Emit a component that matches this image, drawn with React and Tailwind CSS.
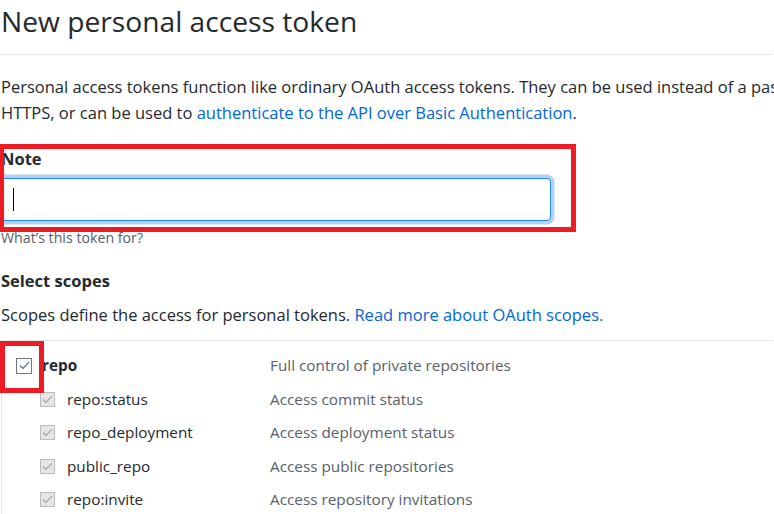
import React from 'react';

const scopes = [
  { name: 'repo:status', desc: 'Access commit status' },
  { name: 'repo_deployment', desc: 'Access deployment status' },
  { name: 'public_repo', desc: 'Access public repositories' },
  { name: 'repo:invite', desc: 'Access repository invitations' },
];

const Check = ({ disabled }) => (
  <span
    className={
      disabled
        ? 'flex h-[15px] w-[15px] items-center justify-center border border-[#bcbcbc] bg-[#e6e6e6]'
        : 'flex h-[16px] w-[16px] items-center justify-center border border-[#767676] bg-white'
    }
  >
    <svg width="11" height="9" viewBox="0 0 11 9" fill="none">
      <path
        d="M1 4.5 L4 7.5 L10 1.2"
        stroke={disabled ? '#a3a3a3' : '#4a6785'}
        strokeWidth="1.1"
      />
    </svg>
  </span>
);

export default function App() {
  return (
    <div
      className="relative h-[514px] w-[774px] overflow-hidden bg-white text-[#24292e]"
      style={{ fontFamily: '"Open Sans", "Noto Sans", sans-serif' }}
    >
      <div className="px-[1px]">
        {/* Header */}
        <h1 className="border-b border-[#e1e4e8] pb-[13px] pt-[1px] text-[28.2px] font-normal leading-[40px]">
          New personal access token
        </h1>

        <p className="mt-[19px] whitespace-nowrap text-[16.5px] leading-[26px]">
          Personal access tokens function like ordinary OAuth access tokens. They can be used instead of a password for Git over
          <br />
          HTTPS, or can be used to{' '}
          <a className="text-[#0366d6]">authenticate to the API over Basic Authentication</a>.
        </p>

        {/* Note */}
        <div className="mt-[20px] text-[16.5px] font-bold leading-[26px]">Note</div>
        <div className="relative mt-[6px] h-[43px] w-[550px] rounded-[4px] border border-[#2188ff] bg-white shadow-[0_0_0_3.5px_rgba(3,102,214,0.3)]">
          <span className="absolute left-[11px] top-[9px] h-[23px] w-[1px] bg-black" />
        </div>
        <div className="mt-[7px] text-[14.2px] leading-[20px] text-[#586069]">What’s this token for?</div>

        {/* Scopes */}
        <div className="mt-[20px] text-[16.5px] font-bold leading-[26px]">Select scopes</div>
        <p className="mt-[8px] text-[16.5px] leading-[26px]">
          Scopes define the access for personal tokens.{' '}
          <a className="text-[#0366d6]">Read more about OAuth scopes.</a>
        </p>

        <div className="mt-[12px] border-l border-t border-[#e1e4e8] pt-[8px] text-[15.3px]">
          <div className="flex h-[33.5px] items-center">
            <div className="flex w-[268px] items-center">
              <span className="ml-[14px]">
                <Check />
              </span>
              <span className="ml-[10px] font-bold">repo</span>
            </div>
            <span className="text-[#586069]">Full control of private repositories</span>
          </div>
          {scopes.map((s) => (
            <div key={s.name} className="flex h-[33.5px] items-center">
              <div className="flex w-[268px] items-center">
                <span className="ml-[38px]">
                  <Check disabled />
                </span>
                <span className="ml-[12px]">{s.name}</span>
              </div>
              <span className="text-[#586069]">{s.desc}</span>
            </div>
          ))}
        </div>
      </div>

      {/* Annotation boxes */}
      <div className="pointer-events-none absolute left-[-1px] top-[144px] h-[88px] w-[577px] border-[5px] border-[#ed1c24]" />
      <div className="pointer-events-none absolute left-[0px] top-[341px] h-[52px] w-[44px] border-[5px] border-[#ed1c24]" />
    </div>
  );
}
